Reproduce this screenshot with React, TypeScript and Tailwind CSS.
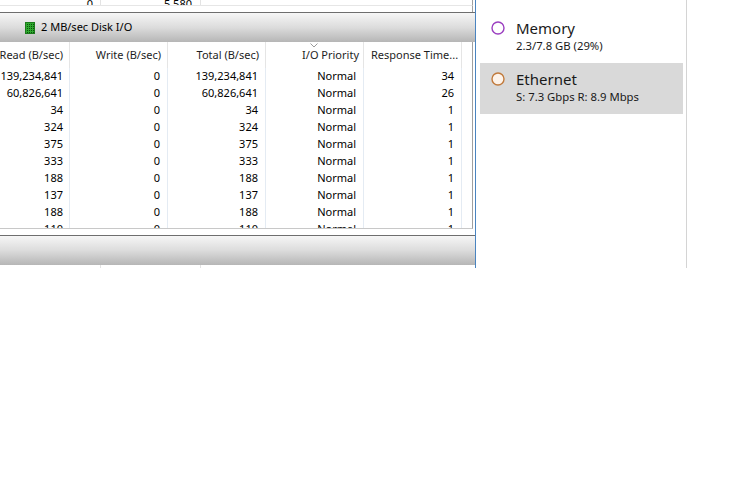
import React from 'react'

const rows = [
  ['139,234,841', '0', '139,234,841', 'Normal', '34'],
  ['60,826,641', '0', '60,826,641', 'Normal', '26'],
  ['34', '0', '34', 'Normal', '1'],
  ['324', '0', '324', 'Normal', '1'],
  ['375', '0', '375', 'Normal', '1'],
  ['333', '0', '333', 'Normal', '1'],
  ['188', '0', '188', 'Normal', '1'],
  ['137', '0', '137', 'Normal', '1'],
  ['188', '0', '188', 'Normal', '1'],
  ['110', '0', '110', 'Normal', '1'],
]

function DiskIcon() {
  return (
    <svg width="10" height="12" viewBox="0 0 10 12" className="shrink-0">
      <defs>
        <pattern id="dots" width="2" height="2" patternUnits="userSpaceOnUse">
          <rect width="2" height="2" fill="#2eaa2e" />
          <rect width="1" height="1" fill="#0b4f0b" />
        </pattern>
      </defs>
      <rect width="10" height="12" fill="url(#dots)" />
      <rect x="0.5" y="0.5" width="9" height="11" fill="none" stroke="#1c7a1c" />
    </svg>
  )
}

function Bar({ children }: { children?: React.ReactNode }) {
  return (
    <div className="h-[30px] border-t border-[#6e6e6e] bg-linear-to-b from-[#f6f6f6] via-[#dcdcdc] to-[#b6b6b6] flex items-center pl-[25px] gap-[6px]">
      {children}
    </div>
  )
}

function Circle({ stroke, fill }: { stroke: string; fill: string }) {
  return (
    <svg width="14" height="14" viewBox="0 0 14 14" className="shrink-0 mt-[9px]">
      <circle cx="7" cy="7" r="6" fill={fill} stroke={stroke} strokeWidth="1.4" />
    </svg>
  )
}

export default function App() {
  return (
    <div className="w-[752px] h-[481px] bg-white font-['Noto_Sans',sans-serif] text-black">
      <div className="flex h-[268px]">
        {/* Left: disk section */}
        <div className="w-[476px] border-r border-[#4a84c0] flex flex-col">
          {/* top table, clipped */}
          <div className="h-[5px] w-[473px] overflow-hidden border-r border-[#a0a0a0] flex text-[11px]">
            <div className="w-[101px] border-r border-[#e3e3e3] text-right pr-[7px] leading-[17px] -mt-[5px] h-[22px]">0</div>
            <div className="w-[100px] border-r border-[#e3e3e3] text-right pr-[8px] leading-[17px] -mt-[5px] h-[22px]">5,580</div>
          </div>
          <div className="h-[7px] w-[473px] border-t border-[#e6e6e6] border-r border-r-[#a0a0a0]" />
          <Bar>
            <DiskIcon />
            <span className="text-[11px] text-black">2 MB/sec Disk I/O</span>
          </Bar>

          {/* header row */}
          <div className="h-[26px] w-[473px] border-r border-[#a0a0a0] flex text-[11px] text-[#1e1e1e] whitespace-nowrap">
            <div className="w-[70px] shrink-0 border-r border-[#e5e5e5] flex items-center justify-end pr-[6px]">Read (B/sec)</div>
            <div className="w-[98px] shrink-0 border-r border-[#e5e5e5] flex items-center justify-end pr-[6px]">Write (B/sec)</div>
            <div className="w-[98px] shrink-0 border-r border-[#e5e5e5] flex items-center justify-end pr-[6px]">Total (B/sec)</div>
            <div className="relative w-[98px] shrink-0 border-r border-[#e5e5e5] flex items-center justify-end pr-[4px]">
              <svg width="8" height="5" viewBox="0 0 8 5" className="absolute top-[1px] left-[44px]">
                <path d="M0.5 0.5 L4 4 L7.5 0.5" fill="none" stroke="#9a9a9a" strokeWidth="1" />
              </svg>
              I/O Priority
            </div>
            <div className="w-[98px] shrink-0 border-r border-[#e5e5e5] flex items-center pl-[7px]">Response Time...</div>
            <div className="flex-1" />
          </div>

          {/* body */}
          <div className="h-[161px] w-[473px] overflow-hidden border-r border-[#a0a0a0] border-b border-b-[#c8c8c8] text-[11px] whitespace-nowrap">
            {rows.map((r, i) => (
              <div key={i} className="flex h-[17px] leading-[16px]">
                <div className="w-[70px] shrink-0 border-r border-[#e4ebf3] text-right pr-[6px]">{r[0]}</div>
                <div className="w-[98px] shrink-0 border-r border-[#e4ebf3] text-right pr-[7px]">{r[1]}</div>
                <div className="w-[98px] shrink-0 border-r border-[#e4ebf3] text-right pr-[7px]">{r[2]}</div>
                <div className="w-[98px] shrink-0 border-r border-[#e4ebf3] text-right pr-[7px]">{r[3]}</div>
                <div className="w-[98px] shrink-0 border-r border-[#e4ebf3] text-right pr-[7px]">{r[4]}</div>
                <div className="flex-1" />
              </div>
            ))}
          </div>
          <div className="h-[6px]" />
          <Bar />

          {/* next table, mostly hidden */}
          <div className="h-[3px] w-[473px] flex">
            <div className="w-[101px] border-r border-[#e3e3e3]" />
            <div className="w-[100px] border-r border-[#e3e3e3]" />
          </div>
        </div>

        {/* Right: resource list */}
        <div className="w-[211px] border-r border-[#d4d4d4] pt-[12px] pl-[4px] pr-[3px] flex flex-col">
          <div className="h-[51px] flex pl-[11px] gap-[11px]">
            <Circle stroke="#9b3fc0" fill="#ffffff" />
            <div className="flex flex-col pt-[6px]">
              <span className="text-[15px] leading-[20px] text-[#1a1a1a]">Memory</span>
              <span className="text-[11.3px] leading-[16px] text-[#1a1a1a]">2.3/7.8 GB (29%)</span>
            </div>
          </div>
          <div className="h-[51px] flex pl-[11px] gap-[11px] bg-[#d9d9d9]">
            <Circle stroke="#c17a3c" fill="#fdf3ea" />
            <div className="flex flex-col pt-[6px]">
              <span className="text-[15px] leading-[20px] text-[#1a1a1a]">Ethernet</span>
              <span className="text-[11.3px] leading-[16px] text-[#1a1a1a]">S: 7.3 Gbps R: 8.9 Mbps</span>
            </div>
          </div>
        </div>
      </div>
    </div>
  )
}
